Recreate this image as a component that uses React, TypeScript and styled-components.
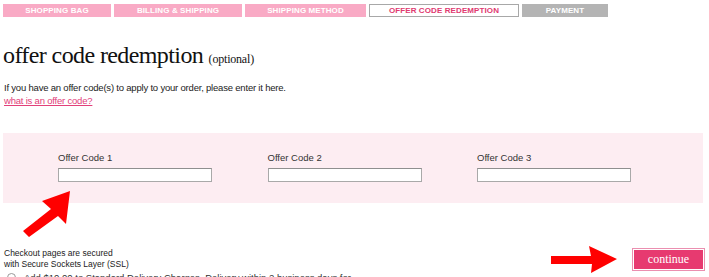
import React from "react";
import styled, { createGlobalStyle } from "styled-components";

const Global = createGlobalStyle`
  html, body { margin: 0; padding: 0; background: #fff; }
  body { font-family: "Liberation Sans", Arial, sans-serif; color: #222; overflow: hidden; }
`;

const Page = styled.div`
  position: relative;
  width: 709px;
  height: 277px;
  overflow: hidden;
  padding: 4px 3px 0 3px;
  box-sizing: border-box;
`;

const Steps = styled.div`
  display: flex;
  gap: 3px;
`;

const Step = styled.div<{ $w: number; $kind: "done" | "active" | "todo" }>`
  width: ${(p) => p.$w}px;
  height: 13px;
  box-sizing: border-box;
  display: flex;
  align-items: center;
  justify-content: center;
  font-family: "Liberation Sans", Arial, sans-serif;
  font-weight: bold;
  font-size: 8px;
  letter-spacing: 0.1px;
  background: ${(p) => (p.$kind === "done" ? "#f9aac5" : p.$kind === "todo" ? "#b4b4b4" : "#fff")};
  color: ${(p) => (p.$kind === "active" ? "#e03a70" : "#fff")};
  border: ${(p) => (p.$kind === "active" ? "1px solid #a8a8a8" : "none")};
`;

const Heading = styled.h1`
  margin: 24px 0 0 0;
  font-family: "Liberation Serif", "Times New Roman", serif;
  font-weight: normal;
  font-size: 24px;
  line-height: 28px;
  color: #111;
  letter-spacing: -0.6px;
`;

const Optional = styled.span`
  font-size: 12px;
  letter-spacing: -0.2px;
`;

const Intro = styled.p`
  margin: 8px 0 0 1px;
  font-size: 9.5px;
  line-height: 13px;
  letter-spacing: -0.2px;
  color: #222;
`;

const HelpLink = styled.a`
  display: block;
  margin-left: 1px;
  font-size: 9.5px;
  line-height: 13px;
  letter-spacing: -0.2px;
  color: #e2407a;
  text-decoration: underline;
`;

const CodePanel = styled.div`
  margin-top: 26px;
  height: 70px;
  width: 700px;
  background: #fdedf2;
  display: grid;
  grid-template-columns: repeat(3, 209.5px);
  padding: 19px 0 0 55px;
  box-sizing: border-box;
`;

const Field = styled.label`
  display: flex;
  flex-direction: column;
  gap: 4px;
  font-size: 9.5px;
  line-height: 12px;
  color: #333;
`;

const CodeInput = styled.input`
  width: 154px;
  height: 14px;
  box-sizing: border-box;
  border: 1px solid #a9a9a9;
  border-top-color: #8f8f8f;
  background: #fff;
  padding: 0;
  margin: 0;
`;

const Footer = styled.div`
  margin-top: 42px;
  display: flex;
  justify-content: space-between;
  align-items: flex-start;
`;

const SecureNote = styled.div`
  margin-top: 3px;
  margin-left: 1px;
  font-size: 8.5px;
  line-height: 11px;
  color: #222;
`;

const DeliveryRow = styled.div`
  display: flex;
  align-items: center;
  gap: 8px;
  margin-top: 2px;
  margin-left: 4px;
  font-size: 9.5px;
  color: #333;
  white-space: nowrap;
`;

const Radio = styled.span`
  width: 9px;
  height: 9px;
  border-radius: 50%;
  border: 1px solid #999;
  box-sizing: border-box;
`;

const Actions = styled.div`
  display: flex;
  align-items: center;
  gap: 16px;
  margin-right: 2px;
  margin-top: 1px;
`;

const ContinueButton = styled.button`
  width: 71px;
  height: 21px;
  box-sizing: border-box;
  background: #e73a70;
  border: 1px solid #fff;
  outline: 1px solid #eb8fb0;
  color: #fff;
  font-family: "Liberation Serif", "Times New Roman", serif;
  font-size: 12px;
  padding: 0 0 1px 0;
  cursor: pointer;
`;

const DiagArrow = styled.svg`
  position: absolute;
  left: 22px;
  top: 190px;
`;

const steps: { label: string; w: number; kind: "done" | "active" | "todo" }[] = [
  { label: "SHOPPING BAG", w: 108, kind: "done" },
  { label: "BILLING & SHIPPING", w: 128, kind: "done" },
  { label: "SHIPPING METHOD", w: 121, kind: "done" },
  { label: "OFFER CODE REDEMPTION", w: 150, kind: "active" },
  { label: "PAYMENT", w: 86, kind: "todo" },
];

export default function App() {
  return (
    <>
      <Global />
      <Page>
        <Steps>
          {steps.map((s) => (
            <Step key={s.label} $w={s.w} $kind={s.kind}>
              {s.label}
            </Step>
          ))}
        </Steps>
        <Heading>
          offer code redemption <Optional>(optional)</Optional>
        </Heading>
        <Intro>If you have an offer code(s) to apply to your order, please enter it here.</Intro>
        <HelpLink href="#">what is an offer code?</HelpLink>
        <CodePanel>
          {[1, 2, 3].map((n) => (
            <Field key={n}>
              Offer Code {n}
              <CodeInput type="text" />
            </Field>
          ))}
        </CodePanel>
        <Footer>
          <div>
            <SecureNote>
              Checkout pages are secured
              <br />
              with Secure Sockets Layer (SSL)
            </SecureNote>
            <DeliveryRow>
              <Radio />
              Add $10.00 to Standard Delivery Charges. Delivery within 2 business days for
            </DeliveryRow>
          </div>
          <Actions>
            <svg width="66" height="27" viewBox="0 0 66 27">
              <polygon points="0,10 40,10 38,0 66,13 40,27 41,18 0,18" fill="#f00" />
            </svg>
            <ContinueButton>continue</ContinueButton>
          </Actions>
        </Footer>
        <DiagArrow width="50" height="48" viewBox="0 0 50 48">
          <polygon points="48,1 44,34 36,26 7,47 1,41 29,19 20,11" fill="#f00" />
        </DiagArrow>
      </Page>
    </>
  );
}
